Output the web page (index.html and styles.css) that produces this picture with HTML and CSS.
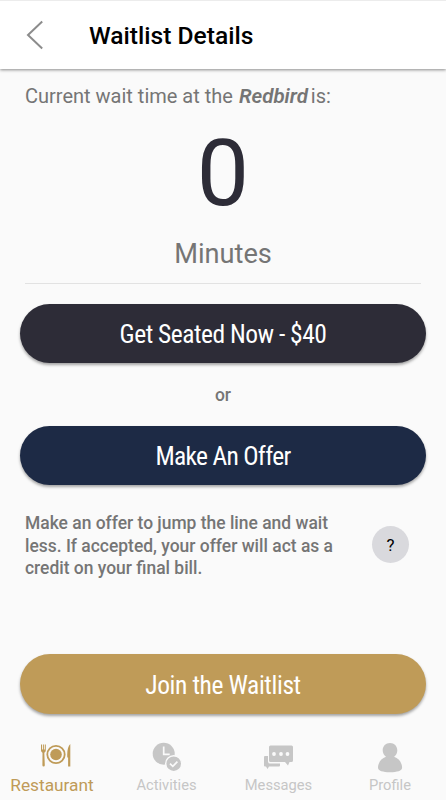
FILE: index.html
```
<!DOCTYPE html>
<html lang="en">
<head>
    <meta charset="UTF-8">
    <meta name="viewport" content="width=device-width, initial-scale=1.0">
    <title>Waitlist Details</title>
    <link rel="stylesheet" href="styles.css">
</head>
<body>
    <header class="top-bar">
        <svg class="back" viewBox="0 0 18 30">
            <path d="M16.2 1.5 L2 15 L16.2 28.5" fill="none" stroke="#8c8c8c" stroke-width="2"/>
        </svg>
        <h1>Waitlist Details</h1>
    </header>

    <main>
        <section class="wait-time">
            <p class="intro">Current wait time at the <em>Redbird</em> is:</p>
            <div class="minutes">0</div>
            <div class="unit">Minutes</div>
        </section>

        <button class="btn seated"><span>Get Seated Now - $40</span></button>
        <p class="or">or</p>
        <button class="btn offer"><span>Make An Offer</span></button>

        <div class="offer-info">
            <p>Make an offer to jump the line and wait<br>less. If accepted, your offer will act as a<br>credit on your final bill.</p>
            <button class="help">?</button>
        </div>

        <button class="btn join"><span>Join the Waitlist</span></button>
    </main>

    <nav class="tabs">
        <a class="tab active">
            <svg viewBox="0 0 32 32">
                <circle cx="16" cy="13.500" r="8.700" fill="none" stroke="currentColor" stroke-width="1.800"/>
                <circle cx="16" cy="13.500" r="5.800" fill="currentColor"/>
                <path d="M1 3.500h1v5h.9v-5h1v5h.9v-5h1v6q0 1.600-1.500 2.200l.5 12.500q0 1.200-1.200 1.200t-1.200-1.200L2.500 11.700Q1 11.100 1 9.500z" fill="currentColor"/>
                <path d="M30.300 3V25.500h-2.200v-9h-.8Q26.700 6.500 30.300 3z" fill="currentColor"/>
            </svg>
            <span>Restaurant</span>
        </a>
        <a class="tab">
            <svg viewBox="0 0 32 32">
                <circle cx="12.700" cy="12.700" r="11" fill="currentColor"/>
                <path d="M12.700 5.500v7.800h6" fill="none" stroke="#fafafa" stroke-width="1.700"/>
                <circle cx="22.700" cy="22.700" r="8" fill="currentColor" stroke="#fafafa" stroke-width="1.400"/>
                <path d="M19 22.600l2.800 2.700 4.600-4.700" fill="none" stroke="#fafafa" stroke-width="1.700"/>
            </svg>
            <span>Activities</span>
        </a>
        <a class="tab">
            <svg viewBox="0 0 32 32">
                <path d="M2 15h3v5.500q0 2 2 2h10v2q0 1-1 1H6L4.500 28 3 25.500H2q-1 0-1-1V16q0-1 1-1z" fill="currentColor"/>
                <path d="M7.500 4.500h21q1.500 0 1.500 1.500v13.500q0 1.500-1.500 1.500h-2L25 24.500 22 21H7.500Q6 21 6 19.500V6q0-1.500 1.500-1.500z" fill="currentColor"/>
                <circle cx="11" cy="13" r="1.900" fill="#fafafa"/>
                <circle cx="18" cy="13" r="1.900" fill="#fafafa"/>
                <circle cx="24.500" cy="13" r="1.900" fill="#fafafa"/>
            </svg>
            <span>Messages</span>
        </a>
        <a class="tab">
            <svg viewBox="0 0 32 32">
                <path d="M16 2c4.300 0 7.300 3.200 7.300 7.300 0 2.700-1.200 5-3.200 6.500 5 1.500 8 6.500 8 11 0 3-5 4.500-12.100 4.500S4 29.800 4 26.800c0-4.500 3-9.500 8-11C10 14.300 8.700 12 8.700 9.300 8.700 5.200 11.700 2 16 2z" fill="currentColor"/>
            </svg>
            <span>Profile</span>
        </a>
    </nav>
</body>
</html>
```
FILE: styles.css
```
* {
    box-sizing: border-box;
}

body {
    margin: 0;
    width: 446px;
    height: 800px;
    display: flex;
    flex-direction: column;
    overflow: hidden;
    background: #fafafa;
    color: #757575;
    font-family: Roboto, sans-serif;
}

h1, p {
    margin: 0;
}

.top-bar {
    height: 69px;
    display: flex;
    align-items: center;
    padding-left: 26px;
    background: white;
    border-top: 1px solid #ececec;
    box-shadow: 0 1px 3px rgba(0, 0, 0, 0.45);
}

.back {
    width: 18px;
    height: 30px;
}

h1 {
    margin-left: 45px;
    font-size: 24.600px;
    font-weight: 500;
    color: #000;
}

main {
    padding: 0 20px;
    display: flex;
    flex-direction: column;
}

.wait-time {
    height: 215px;
    margin: 0 5px;
    border-bottom: 1px solid #e2e2e2;
    text-align: center;
}

.intro {
    padding-top: 15px;
    text-align: left;
    font-size: 20px;
    line-height: 24px;
    white-space: nowrap;
}

.intro em {
    margin: 0 -2px 0 1px;
    font-size: 20.500px;
    font-weight: 600;
}

.minutes {
    margin-top: 11px;
    font-size: 93px;
    line-height: 110px;
    color: #2d2c37;
}

.unit {
    margin-top: 9px;
    font-size: 27.200px;
    line-height: 32px;
}

.btn {
    height: 59px;
    padding: 1px 0 0;
    border: none;
    border-radius: 30px;
    color: white;
    font-family: "Roboto Condensed", Roboto, sans-serif;
    font-size: 25.500px;
    font-stretch: 75%;
    letter-spacing: -0.5px;
    box-shadow: 0 2px 3px rgba(0, 0, 0, 0.35);
}

.seated {
    margin-top: 20px;
    background: #2d2c37;
}

.offer {
    background: #1d2a45;
    letter-spacing: -0.7px;
}

.join {
    height: 60px;
    margin-top: 71px;
    padding-top: 2px;
    background: #bf9b58;
    letter-spacing: -0.4px;
}

.or {
    height: 63px;
    line-height: 64px;
    text-align: center;
    font-size: 17.500px;
    font-weight: 500;
}

.offer-info {
    height: 72px;
    margin: 26px 17px 0 5px;
    display: flex;
    justify-content: space-between;
    align-items: flex-start;
    font-size: 17.450px;
    font-weight: 500;
    line-height: 22.700px;
    white-space: nowrap;
}

.offer-info p {
    padding-top: 1px;
}

.help {
    width: 37px;
    height: 37px;
    margin-top: 15px;
    padding: 0;
    border: none;
    border-radius: 50%;
    background: #d9d9dd;
    color: #000;
    font-family: Roboto, sans-serif;
    font-size: 17px;
}

.tabs {
    margin-top: 27px;
    display: grid;
    grid-template-columns: 104px 125px 99px 124px;
}

.tab {
    display: flex;
    flex-direction: column;
    align-items: center;
    color: #c6c6c6;
    font-size: 14.700px;
    line-height: 20px;
}

.tab svg {
    width: 32px;
    height: 32px;
}

.tab span {
    margin-top: 2px;
}

.active {
    color: #bf9b58;
    font-size: 17.300px;
}

.active svg {
    margin-left: 8px;
}
```
